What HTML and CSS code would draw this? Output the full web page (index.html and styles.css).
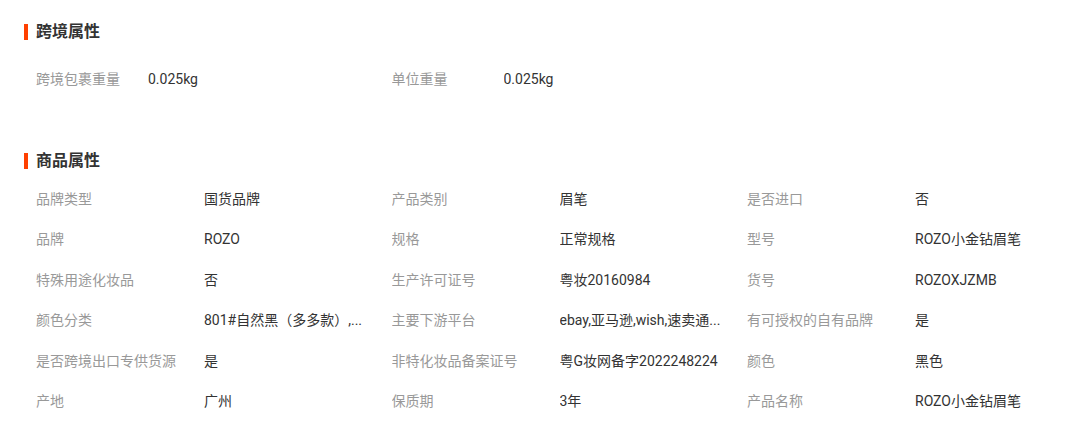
FILE: index.html
```html
<!DOCTYPE html>
<html lang="zh-CN">
<head>
  <meta charset="UTF-8">
  <title>商品属性</title>
  <link rel="stylesheet" href="styles.css">
</head>
<body>
  <div class="attr-panel">
    <h2 class="section-title">跨境属性</h2>
    <div class="attr-grid cross">
      <div class="attr-label">跨境包裹重量</div>
      <div class="attr-value">0.025kg</div>
      <div class="attr-label">单位重量</div>
      <div class="attr-value">0.025kg</div>
    </div>

    <h2 class="section-title goods">商品属性</h2>
    <div class="attr-grid product">
      <div class="attr-label">品牌类型</div>
      <div class="attr-value">国货品牌</div>
      <div class="attr-label">产品类别</div>
      <div class="attr-value">眉笔</div>
      <div class="attr-label">是否进口</div>
      <div class="attr-value">否</div>

      <div class="attr-label">品牌</div>
      <div class="attr-value">ROZO</div>
      <div class="attr-label">规格</div>
      <div class="attr-value">正常规格</div>
      <div class="attr-label">型号</div>
      <div class="attr-value">ROZO小金钻眉笔</div>

      <div class="attr-label">特殊用途化妆品</div>
      <div class="attr-value">否</div>
      <div class="attr-label">生产许可证号</div>
      <div class="attr-value">粤妆20160984</div>
      <div class="attr-label">货号</div>
      <div class="attr-value">ROZOXJZMB</div>

      <div class="attr-label">颜色分类</div>
      <div class="attr-value" title="801#自然黑（多多款）,802#深咖啡（多多款）">801#自然黑（多多款）,...</div>
      <div class="attr-label">主要下游平台</div>
      <div class="attr-value" title="ebay,亚马逊,wish,速卖通,独立站,LAZADA">ebay,亚马逊,wish,速卖通...</div>
      <div class="attr-label">有可授权的自有品牌</div>
      <div class="attr-value">是</div>

      <div class="attr-label">是否跨境出口专供货源</div>
      <div class="attr-value">是</div>
      <div class="attr-label">非特化妆品备案证号</div>
      <div class="attr-value">粤G妆网备字2022248224</div>
      <div class="attr-label">颜色</div>
      <div class="attr-value">黑色</div>

      <div class="attr-label">产地</div>
      <div class="attr-value">广州</div>
      <div class="attr-label">保质期</div>
      <div class="attr-value">3年</div>
      <div class="attr-label">产品名称</div>
      <div class="attr-value">ROZO小金钻眉笔</div>
    </div>
  </div>
</body>
</html>
```

FILE: styles.css
```css
body {
  margin: 0;
  background-color: #fff;
  font-family: Roboto, "Noto Sans CJK SC", sans-serif;
  color: #333;
}
.attr-panel {
  padding: 24px 0 0 24px;
}
.section-title {
  margin: 0;
  height: 16px;
  line-height: 16px;
  font-size: 16px;
  font-weight: bold;
  color: #333;
  border-left: 4px solid #ff4000;
  padding-left: 8px;
}
.section-title.goods {
  margin-top: 54px;
}
.attr-grid {
  display: grid;
  padding-left: 12px;
  font-size: 14px;
}
.attr-grid.cross {
  margin-top: 19px;
  grid-template-columns: 112px 243.5px 112px 243.5px;
  grid-auto-rows: 40px;
}
.attr-grid.product {
  margin-top: 9.5px;
  grid-template-columns: repeat(3, 168px 187.5px);
  grid-auto-rows: 40.5px;
}
.attr-label,
.attr-value {
  line-height: 40px;
  white-space: nowrap;
  overflow: hidden;
  min-width: 0;
}
.attr-label {
  color: #999;
}
.attr-value {
  color: #333;
  padding-right: 16px;
  text-overflow: ellipsis;
}
```
